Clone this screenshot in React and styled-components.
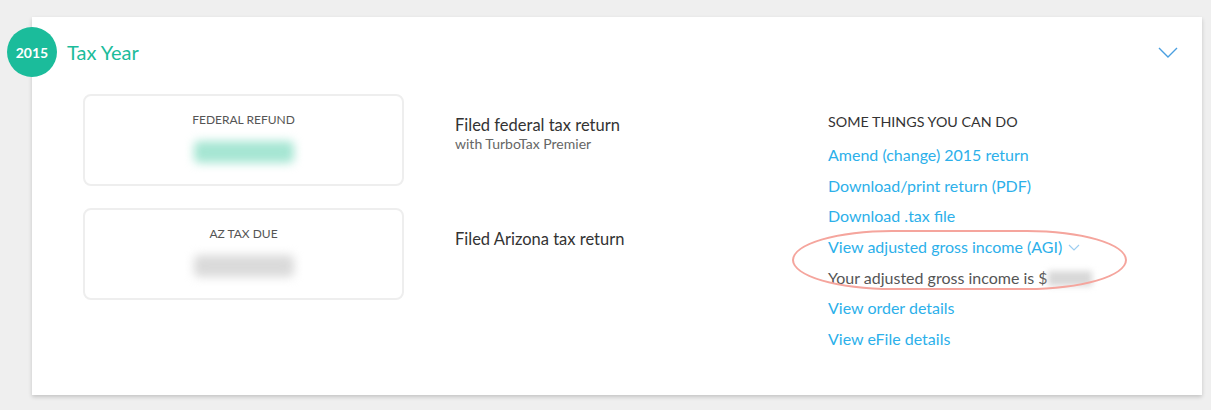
import React from 'react';
import styled, { createGlobalStyle } from 'styled-components';

const GlobalStyle = createGlobalStyle`
  body {
    margin: 0;
    background: #efefef;
    font-family: 'Lato', 'Noto Sans', sans-serif;
  }
`;

const actions = [
  'Amend (change) 2015 return',
  'Download/print return (PDF)',
  'Download .tax file',
];

const App = () => {
  return (
    <>
      <GlobalStyle />
      <Page>
        <Card>
          <Header>
            <YearBadge>2015</YearBadge>
            <HeaderTitle>Tax Year</HeaderTitle>
            <Chevron viewBox="0 0 20 11" width="20" height="11">
              <path d="M1 1 L10 10 L19 1" fill="none" stroke="#4a9fe0" strokeWidth="1.4" />
            </Chevron>
          </Header>
          <Body>
            <SummaryColumn>
              <SummaryRow>
                <AmountBox>
                  <AmountLabel>FEDERAL REFUND</AmountLabel>
                  <BlurredAmount $color="#a6e6d3" />
                </AmountBox>
                <FiledText>
                  <FiledTitle>Filed federal tax return</FiledTitle>
                  <FiledSub>with TurboTax Premier</FiledSub>
                </FiledText>
              </SummaryRow>
              <SummaryRow>
                <AmountBox>
                  <AmountLabel>AZ TAX DUE</AmountLabel>
                  <BlurredAmount $color="#dadada" />
                </AmountBox>
                <FiledText>
                  <FiledTitle>Filed Arizona tax return</FiledTitle>
                </FiledText>
              </SummaryRow>
            </SummaryColumn>
            <Actions>
              <ActionsTitle>SOME THINGS YOU CAN DO</ActionsTitle>
              {actions.map((a) => (
                <ActionLink key={a}>{a}</ActionLink>
              ))}
              <AgiGroup>
                <ActionLink>
                  View adjusted gross income (AGI)
                  <SmallChevron viewBox="0 0 12 7" width="12" height="7">
                    <path d="M1 1 L6 6 L11 1" fill="none" stroke="#9ccdf0" strokeWidth="1.2" />
                  </SmallChevron>
                </ActionLink>
                <AgiText>
                  Your adjusted gross income is $<BlurredInline />
                </AgiText>
                <Highlight />
              </AgiGroup>
              <ActionLink>View order details</ActionLink>
              <ActionLink>View eFile details</ActionLink>
            </Actions>
          </Body>
        </Card>
      </Page>
    </>
  );
};

export default App;

const Page = styled.div`
  padding: 17px 9px 15px 32px;
`;

const Card = styled.div`
  background: #fff;
  min-height: 378px;
  box-sizing: border-box;
  box-shadow: 0 2px 4px rgba(0, 0, 0, 0.18);
  position: relative;
`;

const Header = styled.div`
  display: flex;
  align-items: center;
  height: 70px;
  margin-left: -25px;
`;

const YearBadge = styled.div`
  width: 50px;
  height: 50px;
  border-radius: 50%;
  background: #1bbc9b;
  color: #fff;
  font-weight: 700;
  font-size: 14px;
  display: flex;
  align-items: center;
  justify-content: center;
`;

const HeaderTitle = styled.div`
  margin-left: 10px;
  font-size: 20px;
  color: #1bbc9b;
  flex: 1;
`;

const Chevron = styled.svg`
  margin-right: 24px;
`;

const Body = styled.div`
  display: flex;
  padding: 7px 0 0 51px;
`;

const SummaryColumn = styled.div`
  display: flex;
  flex-direction: column;
  gap: 22px;
  width: 745px;
`;

const SummaryRow = styled.div`
  display: flex;
`;

const AmountBox = styled.div`
  width: 321px;
  height: 92px;
  box-sizing: border-box;
  border: 2px solid #eeeeee;
  border-radius: 8px;
  display: flex;
  flex-direction: column;
  align-items: center;
  padding-top: 16px;
`;

const AmountLabel = styled.div`
  font-size: 12px;
  color: #555;
`;

const BlurredAmount = styled.div`
  margin-top: 14px;
  width: 100px;
  height: 22px;
  background: ${(p) => p.$color};
  border-radius: 5px;
  filter: blur(5px);
`;

const FiledText = styled.div`
  margin-left: 51px;
  padding-top: 21px;
`;

const FiledTitle = styled.div`
  font-size: 16.5px;
  color: #333;
`;

const FiledSub = styled.div`
  font-size: 14px;
  color: #666;
`;

const Actions = styled.div`
  display: flex;
  flex-direction: column;
  padding-top: 19px;
`;

const ActionsTitle = styled.div`
  font-size: 14.3px;
  color: #333;
  margin-bottom: 15px;
`;

const ActionLink = styled.div`
  font-size: 16px;
  color: #2cb0ea;
  height: 30.7px;
  display: flex;
  align-items: flex-start;
`;

const SmallChevron = styled.svg`
  margin-left: 6px;
  margin-top: 7px;
`;

const AgiGroup = styled.div`
  position: relative;
`;

const AgiText = styled.div`
  font-size: 16px;
  color: #555;
  height: 30.7px;
  display: flex;
  align-items: flex-start;
`;

const BlurredInline = styled.span`
  display: inline-block;
  width: 44px;
  height: 15px;
  margin-top: 3px;
  background: #d8d8d8;
  filter: blur(3px);
`;

const Highlight = styled.div`
  position: absolute;
  left: -36px;
  top: -7px;
  width: 331px;
  height: 56px;
  border: 2.5px solid #f5a59d;
  border-radius: 100px / 30px;
  pointer-events: none;
`;
